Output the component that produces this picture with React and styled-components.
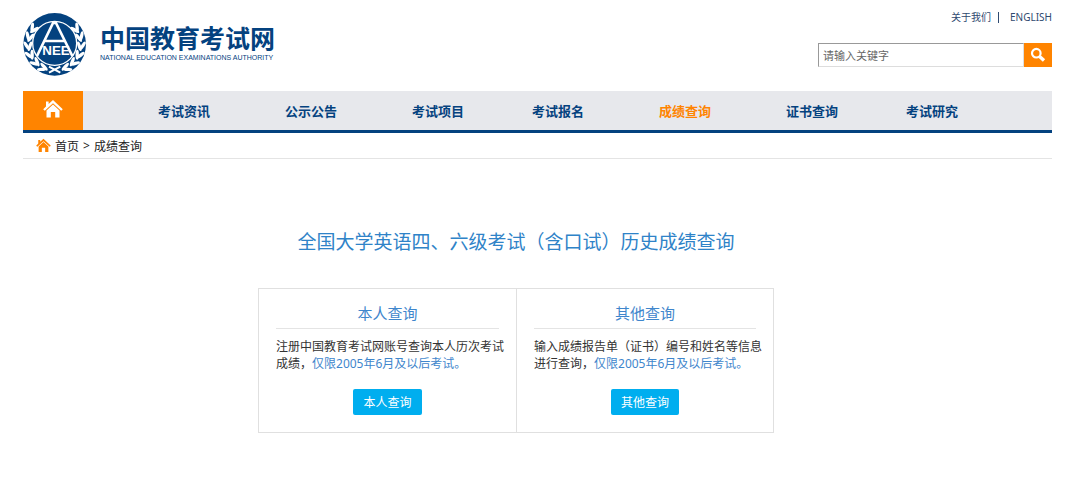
import React, { useState } from 'react';
import styled, { createGlobalStyle } from 'styled-components';

const navItems = ['考试资讯', '公示公告', '考试项目', '考试报名', '成绩查询', '证书查询', '考试研究'];

const queries = [
    {
        title: '本人查询',
        text: '注册中国教育考试网账号查询本人历次考试成绩，',
        note: '仅限2005年6月及以后考试。'
    },
    {
        title: '其他查询',
        text: '输入成绩报告单（证书）编号和姓名等信息进行查询，',
        note: '仅限2005年6月及以后考试。'
    }
];

const leafAngles = [20, 40, 60, 80, 100, 120];

const Emblem = () => (
    <svg width="64" height="64" viewBox="0 0 192 192" role="img" aria-label="NEEA">
        <circle cx="95" cy="97" r="94" fill="#04427f" />
        {[1, -1].map((side) => (
            <g key={side} transform={side === 1 ? undefined : 'translate(190 0) scale(-1 1)'} fill="#fff">
                {leafAngles.map((angle) => (
                    <g key={angle} transform={`rotate(${angle} 95 97)`}>
                        <ellipse cx="88" cy="171" rx="15" ry="5" transform="rotate(28 88 171)" />
                        <ellipse cx="84" cy="181" rx="14" ry="5" transform="rotate(-22 84 181)" />
                    </g>
                ))}
            </g>
        ))}
        <path d="M78 164 L112 182 M112 164 L78 182" stroke="#fff" strokeWidth="6" />
        <circle cx="95" cy="94" r="66" fill="#04427f" stroke="#fff" strokeWidth="4" />
        <path d="M42 132 L90 33 H99 L148 132 M64 87 H126" fill="none" stroke="#fff" strokeWidth="8" />
        <text x="99" y="129" textAnchor="middle" fill="#fff" fontFamily="Liberation Sans, sans-serif" fontSize="40" fontWeight="700">NEE</text>
    </svg>
);

const HouseIcon = ({ size, color }) => (
    <svg width={size} height={size} viewBox="0 0 20 20" fill={color} aria-hidden="true">
        <path d="M10 1 L5.6 5 V2.6 H3 V7.4 L0.2 10.2 L1.8 11.8 L10 4.3 L18.2 11.8 L19.8 10.2 Z" />
        <path d="M10 5.4 L3.5 11.4 V18.5 H7.8 V13 H12.2 V18.5 H16.5 V11.4 Z" />
    </svg>
);

const SearchIcon = () => (
    <svg width="16" height="16" viewBox="0 0 16 16" fill="none" stroke="#fff" aria-hidden="true">
        <circle cx="6.3" cy="6.2" r="4.3" strokeWidth="2.2" />
        <path d="M9.6 9.4 L14 13.4" strokeWidth="3.4" />
    </svg>
);

const App = () => {

    const [keyword, setKeyword] = useState('');

    return (
        <Page>
            <GlobalStyle />
            <Header>
                <Brand href="#">
                    <Emblem />
                    <BrandText>
                        <BrandName>中国教育考试网</BrandName>
                        <BrandSub>NATIONAL EDUCATION EXAMINATIONS AUTHORITY</BrandSub>
                    </BrandText>
                </Brand>
                <HeaderSide>
                    <TopLinks>
                        <a href="#">关于我们</a>
                        <Divider />
                        <a href="#">ENGLISH</a>
                    </TopLinks>
                    <SearchForm onSubmit={(e) => e.preventDefault()}>
                        <SearchInput
                            type="text"
                            aria-label="请输入关键字"
                            placeholder="请输入关键字"
                            value={keyword}
                            onChange={(e) => setKeyword(e.target.value)}
                        />
                        <SearchButton type="submit" aria-label="搜索">
                            <SearchIcon />
                        </SearchButton>
                    </SearchForm>
                </HeaderSide>
            </Header>
            <Nav>
                <HomeLink href="#" aria-label="首页">
                    <HouseIcon size={20} color="#fff" />
                </HomeLink>
                <NavList>
                    {navItems.map((item) => (
                        <NavLink key={item} href="#" $active={item === '成绩查询'}>{item}</NavLink>
                    ))}
                </NavList>
            </Nav>
            <Breadcrumb>
                <HouseIcon size={15} color="#ff8400" />
                <a href="#">首页</a>
                <span>&gt;</span>
                <a href="#">成绩查询</a>
            </Breadcrumb>
            <Main>
                <Title>全国大学英语四、六级考试（含口试）历史成绩查询</Title>
                <Cards>
                    {queries.map(({ title, text, note }) => (
                        <Card key={title}>
                            <CardTitle>{title}</CardTitle>
                            <CardText>
                                {text}<Note>{note}</Note>
                            </CardText>
                            <CardButton type="button">{title}</CardButton>
                        </Card>
                    ))}
                </Cards>
            </Main>
        </Page>
    );
};

export default App

const GlobalStyle = createGlobalStyle`
    * {
        box-sizing: border-box;
    }

    body {
        margin: 0;
        background-color: #fff;
        color: #333;
        font-family: "Noto Sans", "Noto Sans CJK SC", sans-serif;
        font-size: 12px;
    }

    a {
        color: inherit;
        text-decoration: none;
    }

    button,
    input {
        font-family: inherit;
    }
`;

const Page = styled.div`
    padding: 0 28px 0 23px;
`;

const Header = styled.header`
    display: flex;
    justify-content: space-between;
    height: 91px;
`;

const Brand = styled.a`
    display: flex;
    align-items: center;
    gap: 13px;
    padding-bottom: 4px;
    color: #04427f;
`;

const BrandText = styled.div`
    display: flex;
    flex-direction: column;
    white-space: nowrap;
`;

const BrandName = styled.span`
    font-size: 25px;
    font-weight: 700;
    line-height: 28px;
`;

const BrandSub = styled.span`
    font-family: "Liberation Sans", sans-serif;
    font-size: 7px;
    line-height: 12px;
`;

const HeaderSide = styled.div`
    display: flex;
    flex-direction: column;
    align-items: flex-end;
    gap: 17px;
    padding-top: 8px;
`;

const TopLinks = styled.div`
    display: flex;
    align-items: center;
    font-size: 10px;
    line-height: 18px;
    color: #2f4a70;
`;

const Divider = styled.span`
    width: 1px;
    height: 11px;
    margin: 0 11px 0 7px;
    background-color: #2f4a70;
`;

const SearchForm = styled.form`
    display: flex;
    height: 24px;
`;

const SearchInput = styled.input`
    width: 206px;
    padding: 0 4px;
    border: 1px solid #ddd;
    border-top-color: #999;
    border-left-color: #999;
    outline: none;
    font-size: 11px;

    &::placeholder {
        color: #666;
    }
`;

const SearchButton = styled.button`
    display: flex;
    align-items: center;
    justify-content: center;
    width: 28px;
    padding: 0;
    border: none;
    background-color: #ff8400;
    cursor: pointer;
`;

const Nav = styled.nav`
    display: flex;
    height: 42px;
    border-bottom: 3px solid #04427f;
    background-color: #e7e8ec;
`;

const HomeLink = styled.a`
    display: flex;
    align-items: center;
    justify-content: center;
    width: 60px;
    padding-bottom: 3px;
    background-color: #ff8400;
`;

const NavList = styled.div`
    flex: 1;
    display: grid;
    grid-template-columns: 127fr 127fr 120fr 127fr 127fr 120fr 146fr;
    align-items: center;
    padding-left: 75px;
`;

const NavLink = styled.a`
    font-size: 13px;
    font-weight: 700;
    color: ${({ $active }) => ($active ? '#ff8400' : '#04427f')};
`;

const Breadcrumb = styled.div`
    display: flex;
    align-items: center;
    gap: 4px;
    height: 26px;
    padding-left: 13px;
    border-bottom: 1px solid #e4e4e4;
    color: #222;
`;

const Main = styled.main`
    display: flex;
    flex-direction: column;
    align-items: center;
    padding: 69px 43px 48px 0;
`;

const Title = styled.h1`
    margin: 0 0 32px;
    font-size: 19px;
    font-weight: 400;
    line-height: 28px;
    color: #2f83c8;
`;

const Cards = styled.div`
    display: grid;
    grid-template-columns: 1fr 1fr;
    width: 100%;
    max-width: 516px;
    border: 1px solid #e0e0e0;
`;

const Card = styled.section`
    display: flex;
    flex-direction: column;
    align-items: center;
    padding: 10px 11px 17px 17px;

    & + & {
        border-left: 1px solid #e0e0e0;
    }
`;

const CardTitle = styled.h2`
    align-self: stretch;
    margin: 0 6px 9px 0;
    padding-bottom: 1px;
    border-bottom: 1px solid #e4e4e4;
    font-size: 15px;
    font-weight: 400;
    line-height: 28px;
    text-align: center;
    color: #3f86cc;
`;

const CardText = styled.p`
    align-self: stretch;
    margin: 0 0 17px;
    line-height: 17px;
`;

const Note = styled.span`
    color: #3f86cc;
`;

const CardButton = styled.button`
    height: 26px;
    margin-right: 6px;
    padding: 0 10px;
    border: none;
    border-radius: 2px;
    background-color: #00aeef;
    color: #fff;
    font-size: 12px;
    cursor: pointer;
`;
